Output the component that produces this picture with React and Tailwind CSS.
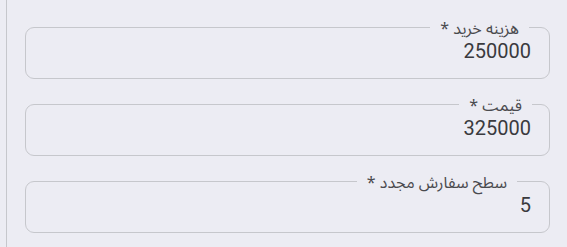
import React from "react";

const fields = [
  { label: "هزینه خرید", value: "250000", legendClass: "mr-[10px]" },
  { label: "قیمت", value: "325000", legendClass: "mr-[7px]" },
  { label: "سطح سفارش مجدد", value: "5", legendClass: "mr-[22px]" },
];

function Field({ label, value, legendClass }) {
  return (
    <fieldset className="border border-[#c6c7cc] rounded-[9px] px-[10px] pb-[13px] m-0 min-w-0">
      <legend
        className={`${legendClass} px-[10px] text-[16px] leading-[20px] text-[#4a4a4e]`}
        style={{ fontFamily: '"Noto Sans Arabic", Roboto, sans-serif' }}
      >
        <span className="relative top-[2px]">{label} *</span>
      </legend>
      <div className="pr-[8px] text-[20px] leading-[28px] text-[#3a3a3e]">{value}</div>
    </fieldset>
  );
}

export default function App() {
  return (
    <div
      className="w-[567px] h-[247px] bg-[#ececf3] overflow-hidden"
      style={{ fontFamily: 'Roboto, "Noto Sans Arabic", sans-serif' }}
    >
      <div className="ml-[6px] h-full border-l border-[#c6c7cc]">
        <div dir="rtl" className="flex flex-col gap-[15px] pt-[17px] pl-[18px] pr-[17px]">
          {fields.map((f) => (
            <Field key={f.label} {...f} />
          ))}
        </div>
      </div>
    </div>
  );
}
